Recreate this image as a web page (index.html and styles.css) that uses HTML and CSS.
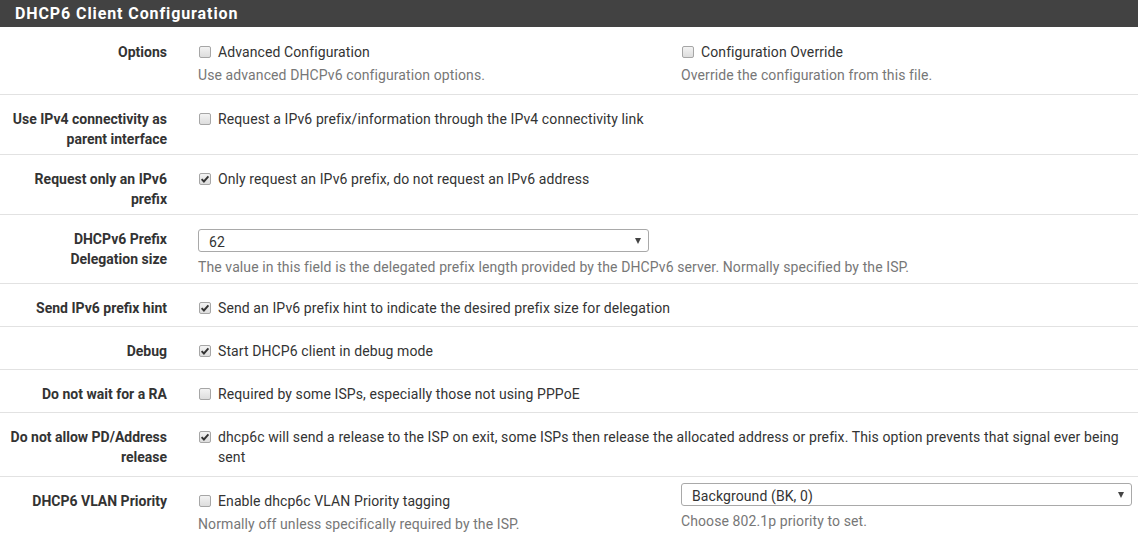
FILE: index.html
```html
<!DOCTYPE html>
<html>
<head>
<meta charset="utf-8">
<link rel="stylesheet" href="styles.css">
</head>
<body>
<div class="panel">
  <div class="panel-heading">DHCP6 Client Configuration</div>

  <div class="row first">
    <div class="label">Options</div>
    <div class="controls split">
      <div class="col">
        <div class="check"><span class="cb"></span>Advanced Configuration</div>
        <div class="help">Use advanced DHCPv6 configuration options.</div>
      </div>
      <div class="col">
        <div class="check"><span class="cb"></span>Configuration Override</div>
        <div class="help">Override the configuration from this file.</div>
      </div>
    </div>
  </div>

  <div class="row">
    <div class="label">Use IPv4 connectivity as parent interface</div>
    <div class="controls">
      <div class="check"><span class="cb"></span>Request a IPv6 prefix/information through the IPv4 connectivity link</div>
    </div>
  </div>

  <div class="row">
    <div class="label">Request only an IPv6 prefix</div>
    <div class="controls">
      <div class="check"><span class="cb on"><svg viewBox="0 0 12 12"><path d="M2.6 6.2 L4.9 8.5 L9.4 3.4" fill="none" stroke="#333" stroke-width="1.9"/></svg></span>Only request an IPv6 prefix, do not request an IPv6 address</div>
    </div>
  </div>

  <div class="row">
    <div class="label">DHCPv6 Prefix Delegation size</div>
    <div class="controls">
      <div class="select sel-top"><span>62</span><i class="arrow"></i></div>
      <div class="help help-sel">The value in this field is the delegated prefix length provided by the DHCPv6 server. Normally specified by the ISP.</div>
    </div>
  </div>

  <div class="row">
    <div class="label">Send IPv6 prefix hint</div>
    <div class="controls">
      <div class="check"><span class="cb on"><svg viewBox="0 0 12 12"><path d="M2.6 6.2 L4.9 8.5 L9.4 3.4" fill="none" stroke="#333" stroke-width="1.9"/></svg></span>Send an IPv6 prefix hint to indicate the desired prefix size for delegation</div>
    </div>
  </div>

  <div class="row">
    <div class="label">Debug</div>
    <div class="controls">
      <div class="check"><span class="cb on"><svg viewBox="0 0 12 12"><path d="M2.6 6.2 L4.9 8.5 L9.4 3.4" fill="none" stroke="#333" stroke-width="1.9"/></svg></span>Start DHCP6 client in debug mode</div>
    </div>
  </div>

  <div class="row">
    <div class="label">Do not wait for a RA</div>
    <div class="controls">
      <div class="check"><span class="cb"></span>Required by some ISPs, especially those not using PPPoE</div>
    </div>
  </div>

  <div class="row">
    <div class="label">Do not allow PD/Address release</div>
    <div class="controls">
      <div class="check check-wrap"><span class="cb on"><svg viewBox="0 0 12 12"><path d="M2.6 6.2 L4.9 8.5 L9.4 3.4" fill="none" stroke="#333" stroke-width="1.9"/></svg></span><span class="txt">dhcp6c will send a release to the ISP on exit, some ISPs then release the allocated address or prefix. This option prevents that signal ever being sent</span></div>
    </div>
  </div>

  <div class="row last">
    <div class="label">DHCP6 VLAN Priority</div>
    <div class="controls split">
      <div class="col">
        <div class="check"><span class="cb"></span>Enable dhcp6c VLAN Priority tagging</div>
        <div class="help">Normally off unless specifically required by the ISP.</div>
      </div>
      <div class="col">
        <div class="select sel-vlan"><span>Background (BK, 0)</span><i class="arrow"></i></div>
        <div class="help help-sel">Choose 802.1p priority to set.</div>
      </div>
    </div>
  </div>
</div>
</body>
</html>
```

FILE: styles.css
```css
html, body {
  margin: 0;
  padding: 0;
  background: #fff;
}

body {
  font-family: Roboto, "Liberation Sans", sans-serif;
  font-size: 14px;
  line-height: 20px;
  color: #333;
  width: 1138px;
}

.panel-heading {
  height: 27px;
  background: #424242;
  color: #fff;
  font-weight: bold;
  font-size: 16px;
  line-height: 27px;
  padding-left: 15px;
  letter-spacing: 0.9px;
}

.row {
  display: flex;
  padding: 7px 0 5px;
  border-bottom: 1px solid #e2e2e2;
}

.row.first {
  padding-top: 8px;
}

.row.last {
  border-bottom: none;
}

.label {
  width: 160px;
  flex: none;
  margin-left: 7px;
  margin-right: 31px;
  padding-top: 7px;
  text-align: right;
  font-weight: bold;
  color: #333;
}

.controls {
  width: 934px;
  flex: none;
  letter-spacing: 0.1px;
}

.split {
  display: flex;
  gap: 32px;
}

.col {
  width: 451px;
  flex: none;
}

.check {
  display: flex;
  align-items: flex-start;
  padding-top: 7px;
  margin-bottom: 3px;
  padding-left: 1px;
}

.check-wrap {
  margin-bottom: 4px;
}

.cb {
  flex: none;
  width: 10px;
  height: 10px;
  margin-top: 4px;
  margin-right: 7px;
  border: 1px solid #a6a6a6;
  border-radius: 2px;
  background: linear-gradient(#f3f3f3, #dddddd);
  position: relative;
}

.cb svg {
  position: absolute;
  left: -1px;
  top: -1px;
  width: 12px;
  height: 12px;
}

.help {
  color: #777;
  margin-top: 1px;
  margin-bottom: 4px;
}

.help-sel {
  margin-top: 5px;
  margin-bottom: 1px;
  white-space: nowrap;
}

.select {
  position: relative;
  width: 449px;
  height: 21px;
  border: 1px solid #a9a9a9;
  border-radius: 3px;
  background: #fff;
  line-height: 24px;
  padding: 0;
}

.select span {
  padding-left: 10px;
  color: #333;
}

.sel-top {
  margin-top: 7px;
}

.sel-vlan {
  margin-top: -1px;
}

.arrow {
  position: absolute;
  right: 7px;
  top: 8px;
  width: 0;
  height: 0;
  border-left: 3.5px solid transparent;
  border-right: 3.5px solid transparent;
  border-top: 6px solid #444;
}
```
